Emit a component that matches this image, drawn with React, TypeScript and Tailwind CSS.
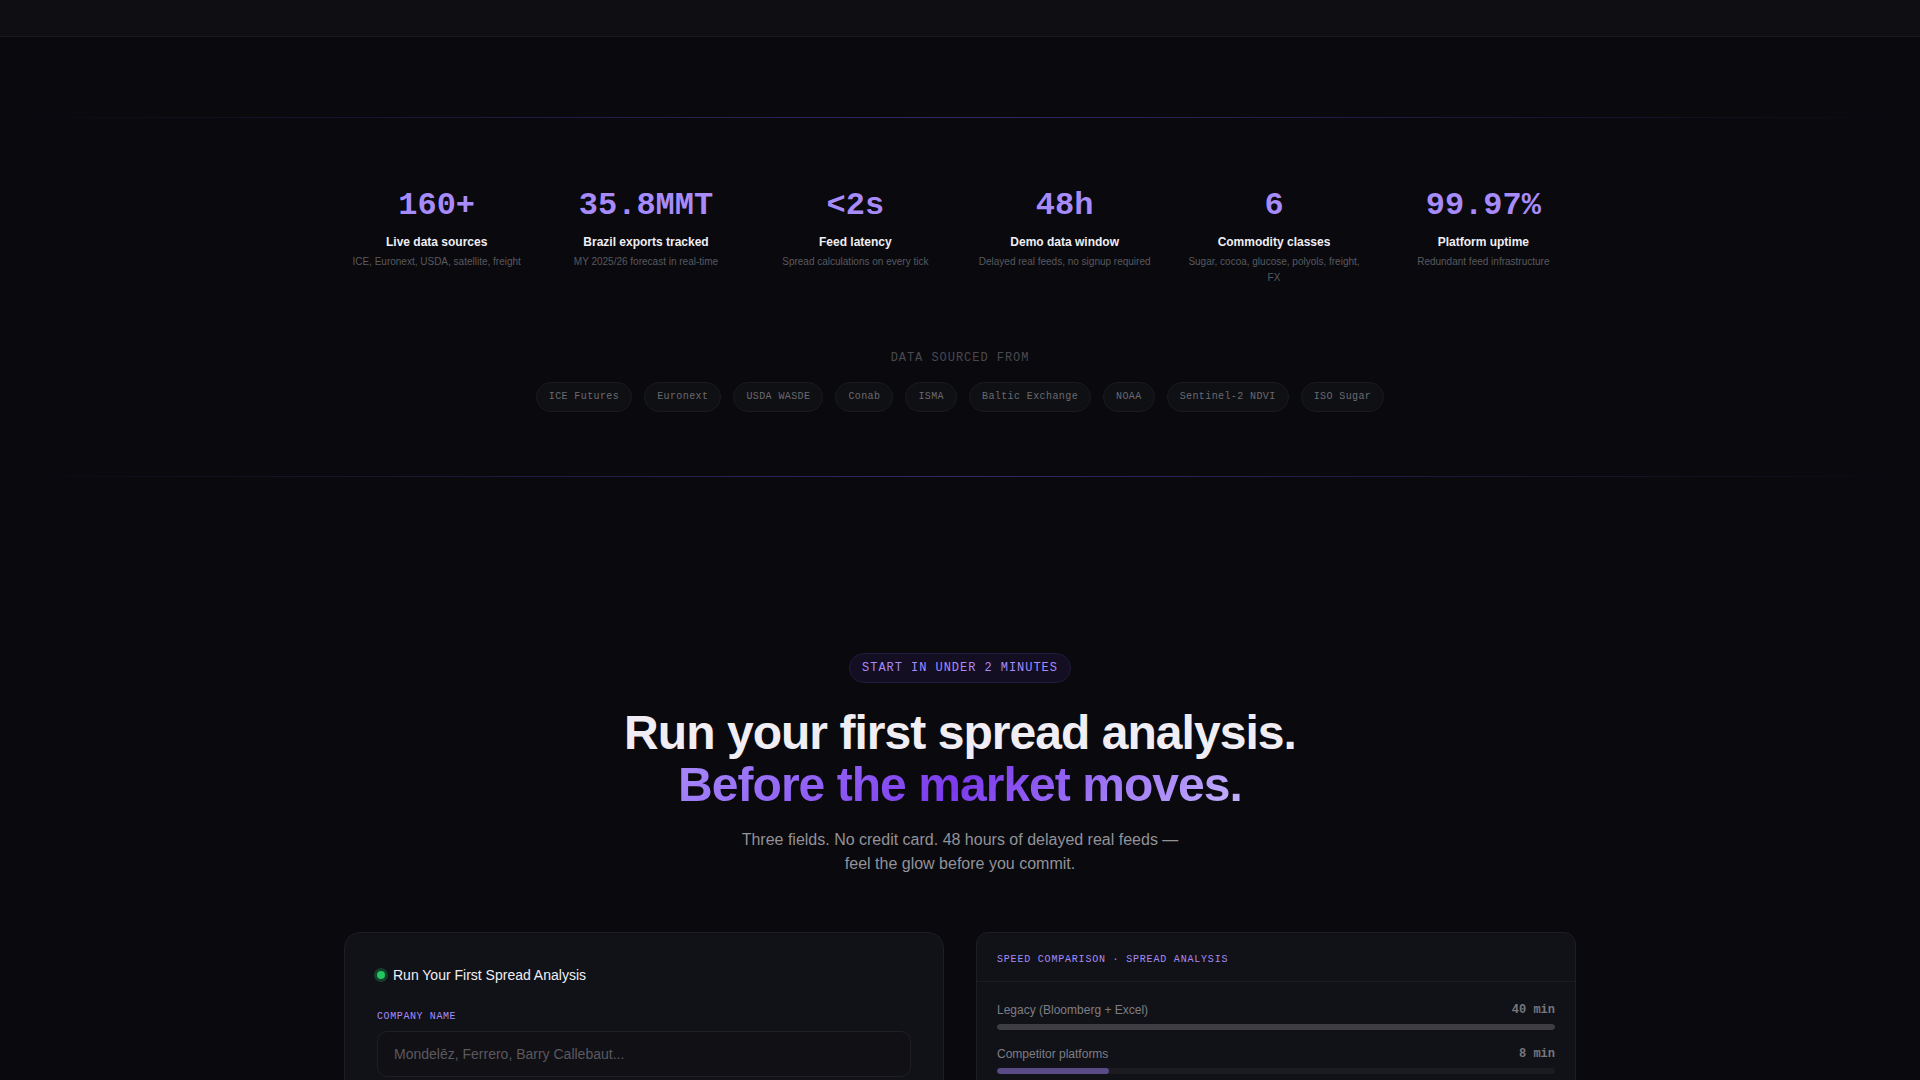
import React from 'react';

interface Stat {
  value: string;
  label: string;
  desc: string;
}

interface Speed {
  name: string;
  time: string;
  percent: number;
  barClass: string;
}

const stats: Stat[] = [
  { value: '160+', label: 'Live data sources', desc: 'ICE, Euronext, USDA, satellite, freight' },
  { value: '35.8MMT', label: 'Brazil exports tracked', desc: 'MY 2025/26 forecast in real-time' },
  { value: '<2s', label: 'Feed latency', desc: 'Spread calculations on every tick' },
  { value: '48h', label: 'Demo data window', desc: 'Delayed real feeds, no signup required' },
  { value: '6', label: 'Commodity classes', desc: 'Sugar, cocoa, glucose, polyols, freight, FX' },
  { value: '99.97%', label: 'Platform uptime', desc: 'Redundant feed infrastructure' },
];

const sources = [
  'ICE Futures',
  'Euronext',
  'USDA WASDE',
  'Conab',
  'ISMA',
  'Baltic Exchange',
  'NOAA',
  'Sentinel-2 NDVI',
  'ISO Sugar',
];

const speeds: Speed[] = [
  { name: 'Legacy (Bloomberg + Excel)', time: '40 min', percent: 100, barClass: 'bg-[#3d3d43]' },
  { name: 'Competitor platforms', time: '8 min', percent: 20, barClass: 'bg-[#594b85]' },
];

const Divider = () => (
  <div className="h-px bg-[linear-gradient(90deg,transparent,#352668_50%,transparent)]" />
);

const StatsSection = () => (
  <section className="max-w-7xl mx-auto px-6 py-16">
    <div className="grid grid-cols-2 md:grid-cols-3 lg:grid-cols-6 gap-6 text-center">
      {stats.map((stat) => (
        <div key={stat.label}>
          <div className="font-['Liberation_Mono',monospace] text-[32px] leading-12 font-bold text-[#a78bfa]">
            {stat.value}
          </div>
          <div className="mt-0.5 text-[12px] leading-5 font-bold text-[#f0eef4]">{stat.label}</div>
          <div className="mt-0.5 text-[10px] leading-4 text-[#5a595f]">{stat.desc}</div>
        </div>
      ))}
    </div>

    {/* Data providers */}
    <div className="mt-16 text-center font-['Liberation_Mono',monospace]">
      <p className="mb-4 text-[12px] leading-4 tracking-[0.08em] text-[#4a494f]">DATA SOURCED FROM</p>
      <ul className="flex flex-wrap justify-center gap-3">
        {sources.map((source) => (
          <li
            key={source}
            className="rounded-full border border-[#1a1a20] bg-[#0f1014] px-3 py-1.5 text-[10px] leading-4 tracking-[0.04em] text-[#6b6a70]"
          >
            {source}
          </li>
        ))}
      </ul>
    </div>
  </section>
);

const DemoForm = () => (
  <form className="rounded-2xl border border-[#1d1d23] bg-[#111217] p-8">
    <div className="mb-6 flex items-center gap-2">
      <span className="size-2 rounded-full bg-[#22c55e] shadow-[0_0_0_3px_#153f2a]" />
      <h3 className="text-[14px] leading-5 text-[#f0eef4]">Run Your First Spread Analysis</h3>
    </div>
    <label
      htmlFor="company"
      className="mb-1.5 block font-['Liberation_Mono',monospace] text-[10px] leading-4 tracking-[0.06em] text-[#a78bfa]"
    >
      COMPANY NAME
    </label>
    <input
      id="company"
      type="text"
      placeholder="Mondelēz, Ferrero, Barry Callebaut..."
      className="h-[46px] w-full rounded-[10px] border border-[#1f1f25] bg-[#111015] px-4 text-[14px] text-[#f0eef4] outline-none placeholder:text-[#5a595f]"
    />
  </form>
);

const SpeedComparison = () => (
  <div className="rounded-xl border border-[#1d1d23] bg-[#111217]">
    <div className="border-b border-[#1b1b21] px-5 pt-[19px] pb-[13px] font-['Liberation_Mono',monospace] text-[10px] leading-4 tracking-[0.08em] text-[#a78bfa]">
      SPEED COMPARISON · SPREAD ANALYSIS
    </div>
    <div className="flex flex-col gap-4 p-5">
      {speeds.map((speed) => (
        <div key={speed.name}>
          <div className="mb-1.5 flex items-center justify-between text-[12px] leading-4 text-[#7e7d83]">
            <span>{speed.name}</span>
            <span className="font-['Liberation_Mono',monospace] font-bold text-[#77767c]">{speed.time}</span>
          </div>
          <div className="h-1.5 overflow-hidden rounded-full bg-[#1b1b20]">
            <div className={`h-full rounded-full ${speed.barClass}`} style={{ width: `${speed.percent}%` }} />
          </div>
        </div>
      ))}
    </div>
  </div>
);

const App = () => {
  return (
    <main className="h-screen overflow-hidden bg-[#09090e] font-['Liberation_Sans',Arial,sans-serif]">
      {/* End of the previous band */}
      <div className="h-[37px] border-b border-[#1a1a1f] bg-[#0e0e13]" />

      <div className="pt-20">
        <Divider />
        <StatsSection />
        <Divider />
      </div>

      {/* Demo section */}
      <section className="max-w-7xl mx-auto px-6 pt-44">
        <div className="mb-14 flex flex-col items-center text-center">
          <span className="rounded-full border border-[#221a3d] bg-[#130e21] px-3 py-1.5 font-['Liberation_Mono',monospace] text-[12px] leading-4 tracking-[0.08em] text-[#a78bfa]">
            START IN UNDER 2 MINUTES
          </span>
          <h2 className="mt-6 text-[48px] leading-[52px] font-bold tracking-[-0.02em] text-[#f0eef4]">
            Run your first spread analysis.
            <br />
            <span className="bg-[linear-gradient(135deg,#a78bfa_0%,#7c3aed_50%,#c4b5fd_100%)] bg-clip-text text-transparent">
              Before the market moves.
            </span>
          </h2>
          <p className="mt-[17px] max-w-[460px] text-[16px] leading-6 text-[#939298]">
            Three fields. No credit card. 48 hours of delayed real feeds — feel the glow before you commit.
          </p>
        </div>

        <div className="grid grid-cols-1 lg:grid-cols-2 gap-8">
          <DemoForm />
          <SpeedComparison />
        </div>
      </section>
    </main>
  );
};

export default App;
